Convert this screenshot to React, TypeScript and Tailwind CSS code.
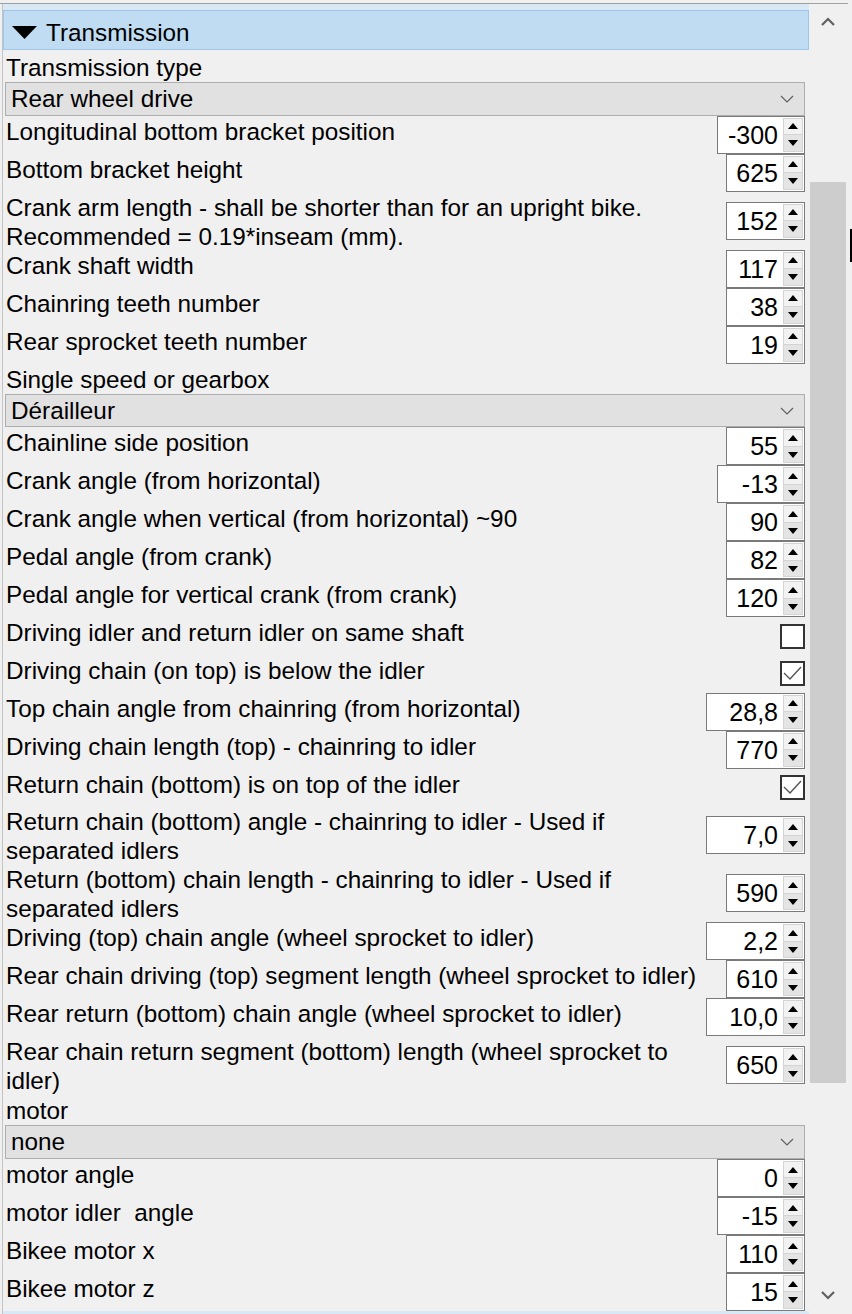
type Item =
  | { kind: 'label'; text: string; h: number }
  | { kind: 'combo'; text: string }
  | { kind: 'spin'; label: string[]; value: string; w: number }
  | { kind: 'check'; label: string; checked: boolean };

const items: Item[] = [
  { kind: 'label', text: 'Transmission type', h: 32 },
  { kind: 'combo', text: 'Rear wheel drive' },
  { kind: 'spin', label: ['Longitudinal bottom bracket position'], value: '-300', w: 88 },
  { kind: 'spin', label: ['Bottom bracket height'], value: '625', w: 79 },
  {
    kind: 'spin',
    label: ['Crank arm length - shall be shorter than for an upright bike.', 'Recommended = 0.19*inseam (mm).'],
    value: '152',
    w: 79,
  },
  { kind: 'spin', label: ['Crank shaft width'], value: '117', w: 79 },
  { kind: 'spin', label: ['Chainring teeth number'], value: '38', w: 79 },
  { kind: 'spin', label: ['Rear sprocket teeth number'], value: '19', w: 79 },
  { kind: 'label', text: 'Single speed or gearbox', h: 30 },
  { kind: 'combo', text: 'Dérailleur' },
  { kind: 'spin', label: ['Chainline side position'], value: '55', w: 79 },
  { kind: 'spin', label: ['Crank angle (from horizontal)'], value: '-13', w: 88 },
  { kind: 'spin', label: ['Crank angle when vertical (from horizontal) ~90'], value: '90', w: 79 },
  { kind: 'spin', label: ['Pedal angle (from crank)'], value: '82', w: 79 },
  { kind: 'spin', label: ['Pedal angle for vertical crank (from crank)'], value: '120', w: 79 },
  { kind: 'check', label: 'Driving idler and return idler on same shaft', checked: false },
  { kind: 'check', label: 'Driving chain (on top) is below the idler', checked: true },
  { kind: 'spin', label: ['Top chain angle from chainring (from horizontal)'], value: '28,8', w: 99 },
  { kind: 'spin', label: ['Driving chain length (top) - chainring to idler'], value: '770', w: 79 },
  { kind: 'check', label: 'Return chain (bottom) is on top of the idler', checked: true },
  {
    kind: 'spin',
    label: ['Return chain (bottom) angle - chainring to idler - Used if', 'separated idlers'],
    value: '7,0',
    w: 99,
  },
  {
    kind: 'spin',
    label: ['Return (bottom) chain length - chainring to idler - Used if', 'separated idlers'],
    value: '590',
    w: 79,
  },
  { kind: 'spin', label: ['Driving (top) chain angle (wheel sprocket to idler)'], value: '2,2', w: 99 },
  { kind: 'spin', label: ['Rear chain driving (top) segment length (wheel sprocket to idler)'], value: '610', w: 79 },
  { kind: 'spin', label: ['Rear return (bottom) chain angle (wheel sprocket to idler)'], value: '10,0', w: 99 },
  {
    kind: 'spin',
    label: ['Rear chain return segment (bottom) length (wheel sprocket to', 'idler)'],
    value: '650',
    w: 79,
  },
  { kind: 'label', text: 'motor', h: 31 },
  { kind: 'combo', text: 'none' },
  { kind: 'spin', label: ['motor angle'], value: '0', w: 88 },
  { kind: 'spin', label: ['motor idler\u00a0 angle'], value: '-15', w: 88 },
  { kind: 'spin', label: ['Bikee motor x'], value: '110', w: 79 },
  { kind: 'spin', label: ['Bikee motor z'], value: '15', w: 79 },
];

function SpinBox({ value, w }: { value: string; w: number }) {
  return (
    <div className="flex h-[38px] shrink-0 border border-[#7a7a7a] bg-white" style={{ width: w }}>
      <div className="flex flex-1 items-center justify-end pr-[5px] pt-px text-[25px] leading-none">{value}</div>
      <div className="my-px mr-px flex w-[20px] flex-col">
        <div className="flex flex-1 items-center justify-center border border-[#d4d4d4] bg-[#f2f2f2]">
          <svg width="10" height="6" viewBox="0 0 10 6">
            <polygon points="5,0 10,6 0,6" fill="#000" />
          </svg>
        </div>
        <div className="flex flex-1 items-center justify-center border border-t-0 border-[#d4d4d4] bg-[#e4e4e4]">
          <svg width="10" height="6" viewBox="0 0 10 6">
            <polygon points="0,0 10,0 5,6" fill="#000" />
          </svg>
        </div>
      </div>
    </div>
  );
}

function CheckBox({ checked }: { checked: boolean }) {
  return (
    <div className="flex h-[25px] w-[25px] items-center justify-center border-2 border-[#333333] bg-white">
      {checked && (
        <svg width="21" height="21" viewBox="0 0 21 21">
          <polyline points="2,10 8,16 19,4" fill="none" stroke="#555" strokeWidth="1.4" />
        </svg>
      )}
    </div>
  );
}

function Row({ item }: { item: Item }) {
  if (item.kind === 'label') {
    return (
      <div className="pl-[3px] leading-[30px]" style={{ height: item.h, paddingTop: item.h - 29 }}>
        {item.text}
      </div>
    );
  }
  if (item.kind === 'combo') {
    return (
      <div className="ml-[2px] mr-[4px] flex h-[34px] items-center justify-between border border-[#adadad] bg-[#e1e1e1] pl-[5px] pr-[10px]">
        <span className="pt-px leading-none">{item.text}</span>
        <svg width="14" height="8" viewBox="0 0 14 8">
          <polyline points="1,1 7,7 13,1" fill="none" stroke="#606060" strokeWidth="1.2" />
        </svg>
      </div>
    );
  }
  if (item.kind === 'check') {
    return (
      <div className="flex h-[38px] items-center justify-between pl-[3px] pr-[4px]">
        <span className="self-start pt-px leading-[30px]">{item.label}</span>
        <CheckBox checked={item.checked} />
      </div>
    );
  }
  const tall = item.label.length > 1;
  return (
    <div className={`flex items-center justify-between pl-[3px] pr-[4px] ${tall ? 'h-[58px]' : 'h-[38px]'}`}>
      <div className="self-start pt-px leading-[29px]">
        {item.label.map((l) => (
          <div key={l}>{l}</div>
        ))}
      </div>
      <SpinBox value={item.value} w={item.w} />
    </div>
  );
}

export default function App() {
  return (
    <div
      className="relative flex h-[1314px] w-[852px] flex-col overflow-hidden bg-[#f0f0f0] text-[24.3px] text-black"
      style={{ fontFamily: '"Liberation Sans", Arial, sans-serif' }}
    >
      <div className="h-[3px] shrink-0" />
      <div className="h-px w-[848px] shrink-0 bg-[#a0a0a0]" />
      <div className="flex min-h-0 flex-1">
        {/* property list */}
        <div className="ml-[2px] flex w-[807px] flex-col border-l border-[#c4c4c4]">
          <div className="h-[6px] shrink-0 bg-[#d9e8f5]" />
          <div className="flex h-[40px] shrink-0 items-center border border-[#9fc6e8] bg-[#bfdcf3] pl-[8px] pt-[6px]">
            <svg width="25" height="13" viewBox="0 0 25 13" className="mb-[2px] mr-[9px]">
              <polygon points="0,0 25,0 12.5,13" fill="#000" />
            </svg>
            <span className="leading-none">Transmission</span>
          </div>
          {items.map((it, i) => (
            <Row key={i} item={it} />
          ))}
          <div className="h-[3px] shrink-0 bg-[#d9e8f5]" />
        </div>

        {/* scrollbar */}
        <div className="flex w-[38px] flex-col items-center">
          <div className="flex h-[40px] w-full items-center justify-center pb-[6px]">
            <svg width="14" height="9" viewBox="0 0 14 9">
              <polyline points="1,8 7,2 13,8" fill="none" stroke="#606060" strokeWidth="2.2" />
            </svg>
          </div>
          <div className="mt-[138px] h-[901px] w-[36px] bg-[#cdcdcd]" />
          <div className="flex-1" />
          <div className="flex h-[30px] w-full items-center justify-center pb-[8px]">
            <svg width="14" height="9" viewBox="0 0 14 9">
              <polyline points="1,1 7,7 13,1" fill="none" stroke="#606060" strokeWidth="2.2" />
            </svg>
          </div>
        </div>

        {/* window edge */}
        <div className="flex w-[5px] justify-end">
          <div className="mt-[225px] h-[33px] w-[2px] bg-black" />
        </div>
      </div>
    </div>
  );
}
